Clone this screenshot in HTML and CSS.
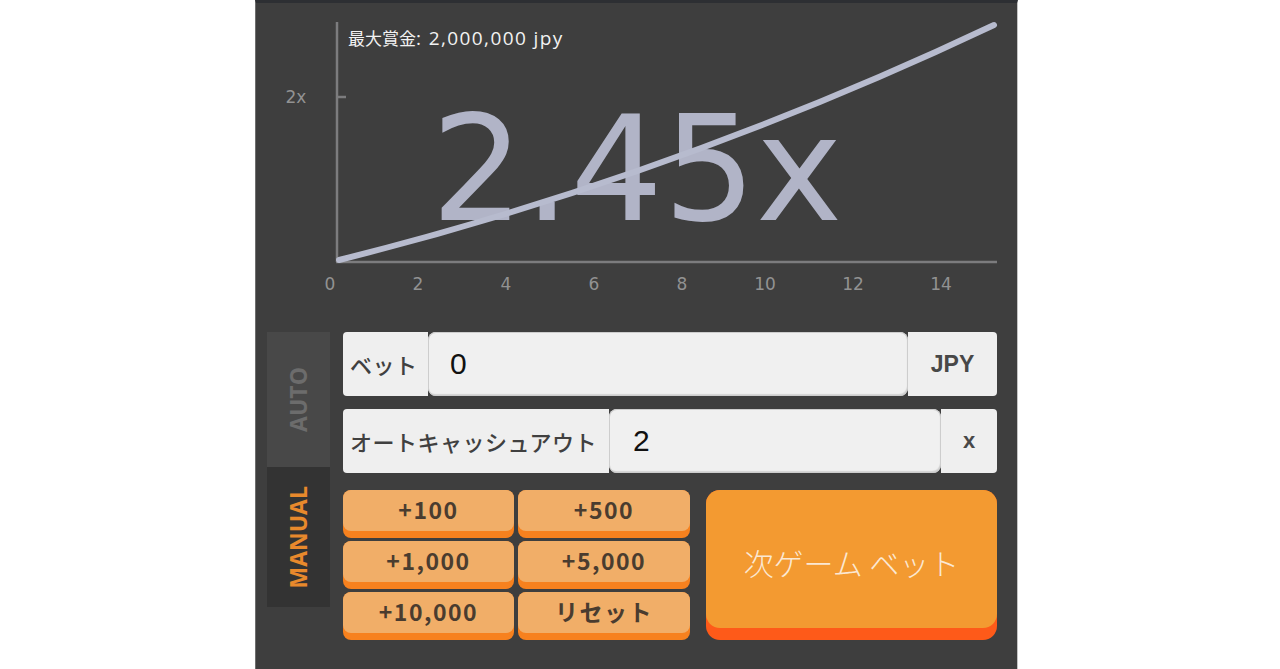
FILE: index.html
```html
<!DOCTYPE html>
<html lang="ja">
<head>
<meta charset="utf-8">
<title>Crash</title>
<link rel="stylesheet" href="styles.css">
</head>
<body>
<div class="panel">
  <svg class="chart" width="761" height="317" viewBox="256 3 761 317" xmlns="http://www.w3.org/2000/svg">
    <text class="prize" x="348" y="45">最大賞金<tspan class="prize-num">: 2,000,000 jpy</tspan></text>
    <text class="mult" x="431" y="220">2.45x</text>
    <line class="axis" x1="337" y1="22" x2="337" y2="262"/>
    <line class="axis" x1="336" y1="262" x2="997" y2="262"/>
    <line class="axis" x1="337" y1="97" x2="346" y2="97"/>
    <text class="ylab" x="296" y="103">2x</text>
    <g class="xlab">
      <text x="330" y="290">0</text>
      <text x="418" y="290">2</text>
      <text x="506" y="290">4</text>
      <text x="594" y="290">6</text>
      <text x="682" y="290">8</text>
      <text x="765" y="290">10</text>
      <text x="853" y="290">12</text>
      <text x="941" y="290">14</text>
    </g>
    <path class="curve" d="M339 260 Q675 176 994 25"/>
  </svg>
  <div class="controls">
    <div class="tabs">
      <div class="tab tab-auto"><span>AUTO</span></div>
      <div class="tab tab-manual"><span>MANUAL</span></div>
    </div>
    <div class="main">
      <div class="field">
        <div class="label label-bet">ベット</div>
        <div class="input input-bet">0</div>
        <div class="unit unit-bet">JPY</div>
      </div>
      <div class="field">
        <div class="label label-auto">オートキャッシュアウト</div>
        <div class="input input-auto">2</div>
        <div class="unit unit-auto">x</div>
      </div>
      <div class="actions">
        <div class="chips">
          <div class="chip"><div class="chip-face">+100</div></div>
          <div class="chip"><div class="chip-face">+500</div></div>
          <div class="chip"><div class="chip-face">+1,000</div></div>
          <div class="chip"><div class="chip-face">+5,000</div></div>
          <div class="chip"><div class="chip-face">+10,000</div></div>
          <div class="chip"><div class="chip-face">リセット</div></div>
        </div>
        <div class="bigbtn"><div class="bigbtn-face">次ゲーム ベット</div></div>
      </div>
    </div>
  </div>
</div>
</body>
</html>
```

FILE: styles.css
```css
* { box-sizing: border-box; }
html, body { margin: 0; padding: 0; background: #ffffff; }
body { font-family: "Noto Sans CJK JP", "Open Sans", sans-serif; }

.panel {
  margin-left: 255px;
  width: 763px;
  height: 669px;
  background: #3e3e3e;
  border-top: 3px solid #2d2f33;
  border-left: 1px solid #6e6e6e;
  border-right: 1px solid #c4c4c4;
}

.chart { display: block; }
.prize { font-family: "Noto Sans CJK JP", sans-serif; font-size: 17px; fill: #f2f2f2; }
.prize-num { font-family: "Open Sans", sans-serif; font-size: 19px; letter-spacing: 1.4px; }
.mult { font-family: "DejaVu Sans", sans-serif; font-size: 146px; fill: #b1b4c7; }
.axis { stroke: #7c7c7e; stroke-width: 2.5; }
.ylab { font-family: "DejaVu Sans", sans-serif; font-size: 17px; fill: #929292; text-anchor: middle; }
.xlab text { font-family: "DejaVu Sans", sans-serif; font-size: 17px; fill: #929292; text-anchor: middle; }
.curve { fill: none; stroke: #b7bbce; stroke-width: 6; stroke-linecap: round; }

.controls {
  display: flex;
  padding: 12px 20px 0 11px;
  gap: 13px;
}

.tabs { width: 63px; display: flex; flex-direction: column; }
.tab {
  display: flex;
  align-items: center;
  justify-content: center;
  font-family: "Open Sans", sans-serif;
  font-weight: 700;
  font-size: 23px;
}
.tab span { writing-mode: vertical-rl; transform: rotate(180deg); line-height: 1; }
.tab-auto { height: 135px; background: #484848; color: #6c6c6c; }
.tab-manual { height: 140px; background: #333333; color: #e8892c; }

.main { width: 654px; display: flex; flex-direction: column; gap: 13px; }

.field { display: flex; height: 64px; }
.label {
  background: #efefef;
  color: #404040;
  font-size: 22px;
  font-weight: 500;
  letter-spacing: 0.5px;
  display: flex;
  align-items: center;
  padding-left: 7px;
  border-radius: 4px 0 0 4px;
}
.label-bet { width: 85px; }
.label-auto { width: 266px; }
.input {
  background: #f0f0f0;
  border-radius: 8px;
  box-shadow: inset 0 0 0 1px #cdcdcd, inset -1px -2px 1px rgba(0,0,0,0.12);
  font-family: "Liberation Sans", sans-serif;
  font-size: 30px;
  color: #111111;
  display: flex;
  align-items: center;
  padding-left: 22px;
}
.input-bet { width: 480px; }
.input-auto { width: 332px; padding-left: 24px; }
.unit {
  background: #efefef;
  color: #484848;
  font-family: "Liberation Sans", sans-serif;
  font-weight: 700;
  display: flex;
  align-items: center;
  justify-content: center;
  border-radius: 0 4px 4px 0;
}
.unit-bet { width: 89px; font-size: 23px; }
.unit-auto { width: 56px; font-size: 22px; }

.actions { display: flex; margin-top: 4px; height: 151px; }
.chips {
  display: grid;
  grid-template-columns: 171px 172px;
  grid-template-rows: repeat(3, 48px);
  column-gap: 4px;
  row-gap: 3px;
}
.chip {
  background: #f7811e;
  border-radius: 8px;
  padding-bottom: 7px;
}
.chip-face {
  height: 100%;
  background: #f1ae68;
  border-radius: 8px;
  display: flex;
  align-items: center;
  justify-content: center;
  font-family: "Noto Sans CJK JP", sans-serif;
  font-weight: 700;
  font-size: 23px;
  color: #4a3c2f;
  letter-spacing: 1.5px;
  padding-bottom: 3px;
}

.bigbtn {
  margin-left: 16px;
  width: 291px;
  height: 150px;
  background: #fe5a19;
  border-radius: 14px;
  padding-bottom: 12px;
}
.bigbtn-face {
  height: 100%;
  background: #f39a31;
  border-radius: 14px;
  display: flex;
  align-items: center;
  justify-content: center;
  font-family: "Noto Sans CJK JP", sans-serif;
  font-weight: 300;
  font-size: 30px;
  color: #fbe8d3;
  padding-top: 6px;
}
```
